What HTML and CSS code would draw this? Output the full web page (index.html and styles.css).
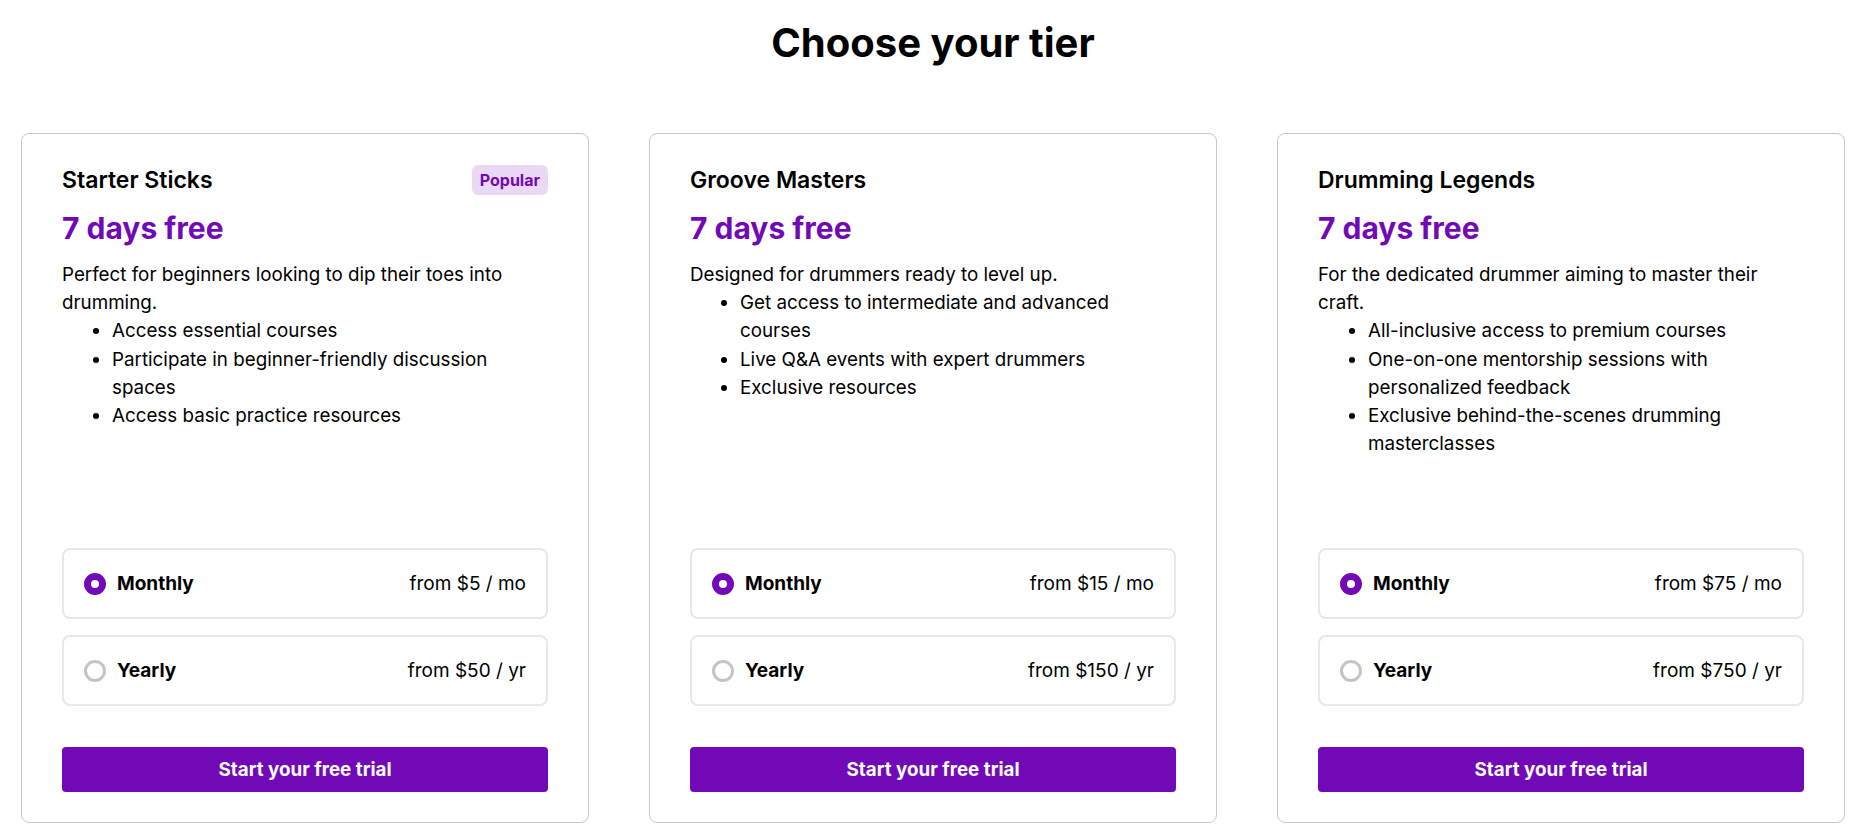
FILE: index.html
```html
<!DOCTYPE html>
<html lang="en">
<head>
<meta charset="utf-8">
<title>Choose your tier</title>
<link rel="stylesheet" href="styles.css">
</head>
<body>
<main class="page">
  <h1 class="page-title">Choose your tier</h1>
  <div class="tiers">
    <section class="tier">
      <div class="tier-head">
        <h2 class="tier-name">Starter Sticks</h2>
        <span class="badge">Popular</span>
      </div>
      <p class="trial">7 days free</p>
      <div class="desc">
        <p>Perfect for beginners looking to dip their toes into drumming.</p>
        <ul>
          <li>Access essential courses</li>
          <li>Participate in beginner-friendly discussion spaces</li>
          <li>Access basic practice resources</li>
        </ul>
      </div>
      <div class="plans">
        <div class="plan">
          <span class="radio radio-on"></span>
          <span class="plan-name">Monthly</span>
          <span class="plan-price">from $5 / mo</span>
        </div>
        <div class="plan">
          <span class="radio"></span>
          <span class="plan-name">Yearly</span>
          <span class="plan-price">from $50 / yr</span>
        </div>
      </div>
      <button class="cta" type="button">Start your free trial</button>
    </section>

    <section class="tier">
      <div class="tier-head">
        <h2 class="tier-name">Groove Masters</h2>
      </div>
      <p class="trial">7 days free</p>
      <div class="desc">
        <p>Designed for drummers ready to level up.</p>
        <ul>
          <li>Get access to intermediate and advanced courses</li>
          <li>Live Q&amp;A events with expert drummers</li>
          <li>Exclusive resources</li>
        </ul>
      </div>
      <div class="plans">
        <div class="plan">
          <span class="radio radio-on"></span>
          <span class="plan-name">Monthly</span>
          <span class="plan-price">from $15 / mo</span>
        </div>
        <div class="plan">
          <span class="radio"></span>
          <span class="plan-name">Yearly</span>
          <span class="plan-price">from $150 / yr</span>
        </div>
      </div>
      <button class="cta" type="button">Start your free trial</button>
    </section>

    <section class="tier">
      <div class="tier-head">
        <h2 class="tier-name">Drumming Legends</h2>
      </div>
      <p class="trial">7 days free</p>
      <div class="desc">
        <p>For the dedicated drummer aiming to master their craft.</p>
        <ul>
          <li>All-inclusive access to premium courses</li>
          <li>One-on-one mentorship sessions with personalized feedback</li>
          <li>Exclusive behind-the-scenes drumming masterclasses</li>
        </ul>
      </div>
      <div class="plans">
        <div class="plan">
          <span class="radio radio-on"></span>
          <span class="plan-name">Monthly</span>
          <span class="plan-price">from $75 / mo</span>
        </div>
        <div class="plan">
          <span class="radio"></span>
          <span class="plan-name">Yearly</span>
          <span class="plan-price">from $750 / yr</span>
        </div>
      </div>
      <button class="cta" type="button">Start your free trial</button>
    </section>
  </div>
</main>
</body>
</html>
```

FILE: styles.css
```css
* {
  box-sizing: border-box;
}

html, body {
  margin: 0;
  padding: 0;
  background: #ffffff;
}

body {
  font-family: Inter, "Noto Sans", "Liberation Sans", sans-serif;
  color: #000000;
}

.page {
  padding: 19px 26px 0 21px;
}

.page-title {
  margin: 0 0 66px;
  text-align: center;
  font-size: 40px;
  font-weight: 700;
  line-height: 48px;
}

.tiers {
  display: grid;
  grid-template-columns: repeat(3, 568px);
  column-gap: 60px;
}

.tier {
  display: flex;
  flex-direction: column;
  height: 690px;
  border: 1px solid #c8c8c8;
  border-radius: 8px;
  padding: 30px 40px 30px;
}

.tier-head {
  display: flex;
  align-items: center;
  justify-content: space-between;
  min-height: 32px;
}

.tier-name {
  margin: 0;
  font-size: 23px;
  font-weight: 600;
  line-height: 32px;
}

.badge {
  display: inline-flex;
  align-items: center;
  height: 30px;
  padding: 0 8px;
  border-radius: 6px;
  background: #ead9f5;
  color: #7209b7;
  font-size: 16px;
  font-weight: 700;
}

.trial {
  margin: 14px 0 0;
  color: #7209b7;
  font-size: 30px;
  font-weight: 700;
  line-height: 36px;
}

.desc {
  margin-top: 15px;
  font-size: 18.8px;
  line-height: 28.2px;
}

.desc p {
  margin: 0;
}

.desc ul {
  margin: 0;
  padding-left: 50px;
}

.plans {
  margin-top: auto;
  display: flex;
  flex-direction: column;
  gap: 16px;
}

.plan {
  display: flex;
  align-items: center;
  height: 71px;
  padding: 0 20px;
  border: 2px solid #e8e8e8;
  border-radius: 8px;
  font-size: 19px;
}

.radio {
  width: 22px;
  height: 22px;
  flex: none;
  border-radius: 50%;
  border: 3px solid #c4c4c4;
  background: #ffffff;
}

.radio-on {
  border: 7px solid #7209b7;
}

.plan-name {
  margin-left: 11px;
  font-weight: 700;
}

.plan-price {
  margin-left: auto;
}

.cta {
  margin-top: 41px;
  height: 45px;
  width: 100%;
  border: none;
  border-radius: 4px;
  background: #7209b7;
  color: #ffffff;
  font-family: inherit;
  font-size: 18.8px;
  font-weight: 700;
}
```
